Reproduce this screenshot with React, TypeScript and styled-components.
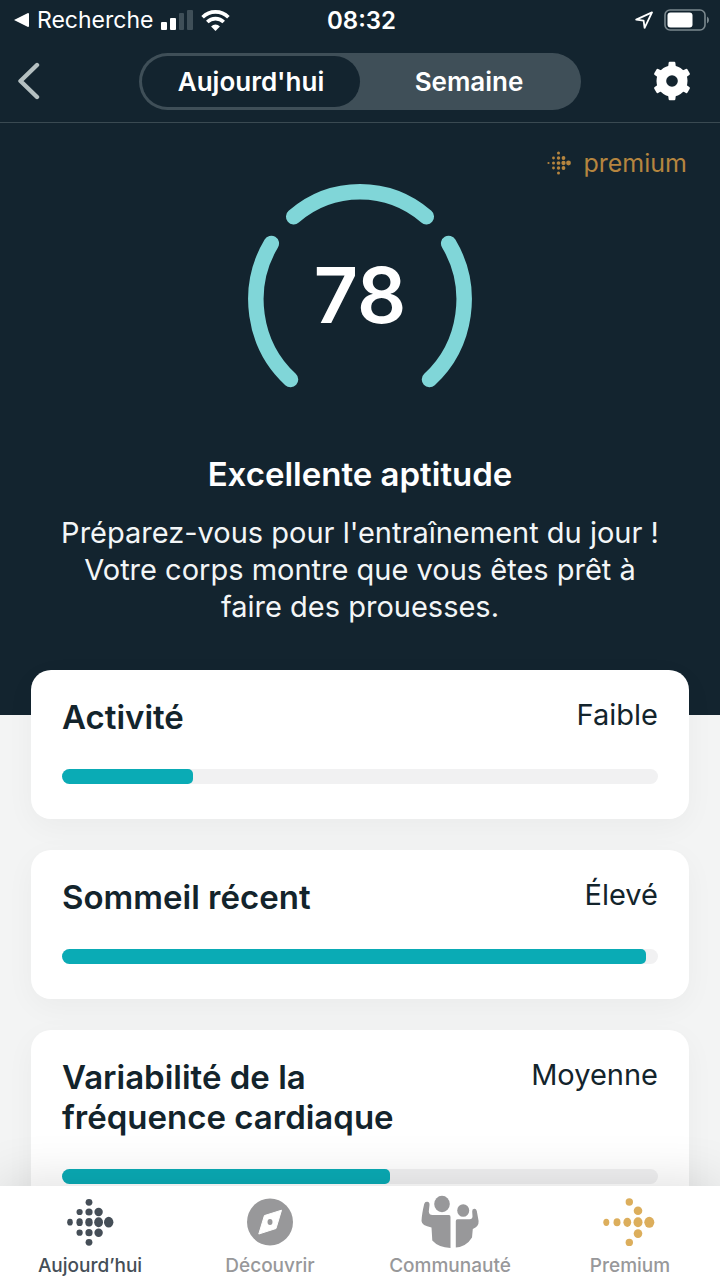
import React, { useState } from "react";
import styled, { createGlobalStyle } from "styled-components";

const color = {
  navy: "#13242f",
  slate: "#3f4f58",
  aqua: "#80d6d8",
  teal: "#0aabb5",
  gold: "#b5853f",
  amber: "#dcae5c",
  ink: "#13242c",
  grey: "#98989a",
};

const GlobalStyle = createGlobalStyle`
  *, *::before, *::after { box-sizing: border-box; }
  body {
    margin: 0;
    font-family: Inter, "Liberation Sans", sans-serif;
    color: ${color.ink};
    background: #f3f4f4;
  }
  h1, h2, p { margin: 0; }
  button { font: inherit; color: inherit; border: 0; padding: 0; background: none; cursor: pointer; }
  svg { display: block; flex: none; }
`;

const Screen = styled.div`
  display: flex;
  flex-direction: column;
  height: 100vh;
  overflow: hidden;
`;

const TopBar = styled.header`
  flex: none;
  color: #fff;
  background: ${color.navy};
  border-bottom: 1px solid #3a4a52;
`;

const StatusBar = styled.div`
  display: grid;
  grid-template-columns: 1fr auto 1fr;
  align-items: center;
  height: 40px;
  padding: 0 11px 0 14px;
`;

const StatusGroup = styled.div<{ $end?: boolean }>`
  display: flex;
  align-items: center;
  justify-content: ${(p) => (p.$end ? "flex-end" : "flex-start")};
  gap: ${(p) => (p.$end ? 11 : 8)}px;
  font-size: 23px;
`;

const Clock = styled.time`
  font-size: 24px;
  font-weight: 600;
`;

const NavBar = styled.div`
  display: grid;
  grid-template-columns: 1fr minmax(0, 442px) 1fr;
  align-items: center;
  height: 82px;
  padding: 0 16px;
`;

const IconButton = styled.button<{ $end?: boolean }>`
  display: flex;
  justify-self: ${(p) => (p.$end ? "end" : "start")};
  padding-right: 12px;
`;

const Segmented = styled.div`
  display: grid;
  grid-template-columns: 1fr 1fr;
  height: 57px;
  padding: 3px;
  border-radius: 29px;
  background: ${color.slate};
`;

const Segment = styled.button<{ $active: boolean }>`
  border-radius: 26px;
  font-size: 26px;
  font-weight: 600;
  background: ${(p) => (p.$active ? color.navy : "transparent")};
`;

const Content = styled.main`
  flex: 1;
  min-height: 0;
  overflow-y: auto;
  scrollbar-width: none;
`;

const Hero = styled.section`
  display: flex;
  flex-direction: column;
  align-items: center;
  padding: 26px 33px 90px;
  text-align: center;
  color: #fff;
  background: ${color.navy};
`;

const PremiumBadge = styled.div`
  display: flex;
  align-items: center;
  align-self: flex-end;
  gap: 12px;
  height: 28px;
  font-size: 25px;
  color: ${color.gold};
`;

const ScoreRing = styled.div`
  display: grid;
  place-items: center;
  margin-top: 5px;
  > * { grid-area: 1 / 1; }
`;

const Score = styled.strong`
  font-size: 77px;
  font-weight: 600;
  line-height: 80px;
`;

const HeroTitle = styled.h1`
  margin-top: 46px;
  font-size: 33px;
  line-height: 40px;
  font-weight: 600;
`;

const HeroText = styled.p`
  max-width: 620px;
  margin-top: 20px;
  font-size: 29px;
  line-height: 37px;
  color: #f3f6f7;
`;

const CardList = styled.div`
  display: flex;
  flex-direction: column;
  gap: 31px;
  margin-top: -45px;
  padding: 0 31px 31px;
`;

const Card = styled.section`
  padding: 27px 31px 35px;
  border-radius: 20px;
  background: #fff;
  box-shadow: 0 8px 30px rgba(0, 0, 0, 0.04);
`;

const CardHead = styled.div`
  display: flex;
  justify-content: space-between;
  align-items: flex-start;
  gap: 16px;
`;

const CardTitle = styled.h2`
  max-width: 360px;
  font-size: 33px;
  line-height: 40px;
  font-weight: 600;
`;

const Level = styled.span`
  font-size: 29px;
  line-height: 35px;
`;

const Track = styled.div`
  height: 15px;
  margin-top: 32px;
  overflow: hidden;
  border-radius: 8px;
  background: #f1f1f2;
`;

const Fill = styled.div`
  height: 100%;
  border-radius: 0 5px 5px 0;
  background: ${color.teal};
`;

const TabBar = styled.nav`
  position: relative;
  flex: none;
  display: grid;
  grid-template-columns: repeat(4, 1fr);
  height: 94px;
  padding-top: 9px;
  background: #fff;
  box-shadow: 0 -6px 50px rgba(0, 0, 0, 0.12);
`;

const Tab = styled.a<{ $active?: boolean }>`
  display: flex;
  flex-direction: column;
  align-items: center;
  gap: 5px;
  font-size: 19px;
  line-height: 24px;
  font-weight: 500;
  text-decoration: none;
  color: ${(p) => (p.$active ? "#454e57" : color.grey)};
`;

type Dot = [x: number, y: number, rx: number, ry?: number];

const todayDots: Dot[] = [
  [23, 4.3, 3.4], [13.6, 14, 3.1], [23, 14, 3.6], [32.6, 14, 4.2],
  [4, 24.2, 2.8, 3.4], [13.6, 24.2, 3.2, 3.9], [23, 24.2, 3.7, 4.3], [32.6, 24.2, 4.4, 5], [42.7, 24.2, 4.7, 5.4],
  [13.6, 34.7, 3.1], [23, 34.7, 3.6], [32.6, 34.7, 4.2], [23, 44.3, 3.4],
];

const badgeDots: Dot[] = [
  [23, 4, 3], [13, 14, 2.8], [23, 14, 3.4], [33, 14, 3.8],
  [3, 24, 2.2], [13, 24, 3], [23, 24, 3.7], [33, 24, 4.3], [43, 24, 4.8],
  [13, 34, 2.8], [23, 34, 3.4], [33, 34, 3.8], [23, 44, 3],
];

const premiumDots: Dot[] = [
  [27.3, 4, 3.7], [36, 12.8, 4.3], [4.3, 24.3, 3, 3.6], [15, 24.3, 3.5, 4], [25.3, 24.3, 3.9, 4.6],
  [36, 24.3, 4.5, 5], [47.3, 24.3, 5, 5.5], [36, 35.6, 4.3], [27.3, 44.4, 3.7],
];

function Dots({ dots, width, height, box, fill = "currentColor" }: {
  dots: Dot[]; width: number; height: number; box: string; fill?: string;
}) {
  return (
    <svg width={width} height={height} viewBox={box} fill={fill} aria-hidden="true">
      {dots.map(([x, y, rx, ry = rx]) => (
        <ellipse key={`${x}-${y}`} cx={x} cy={y} rx={rx} ry={ry} />
      ))}
    </svg>
  );
}

const BackTriangle = () => (
  <svg width="15" height="14" viewBox="0 0 15 14" fill="#fff" aria-hidden="true">
    <path d="M0 7 14 0Q15 0 15 1V13Q15 14 14 14Z" />
  </svg>
);

const SignalIcon = () => (
  <svg width="32" height="20" viewBox="0 0 32 20" fill="#fff" aria-hidden="true">
    <rect x="0" y="12" width="6" height="8" rx="1" />
    <rect x="9" y="8" width="6" height="12" rx="1" />
    <rect x="18" y="3" width="5" height="17" rx="1" fill={color.slate} />
    <rect x="26" y="0" width="6" height="20" rx="1" fill={color.slate} />
  </svg>
);

const WifiIcon = () => (
  <svg width="29" height="21" viewBox="0 0 29 21" fill="none" stroke="#fff" strokeWidth="3.6" aria-hidden="true">
    <path d="M1.6 7.2a18.2 18.2 0 0 1 25.8 0" />
    <path d="M6.3 12a11.6 11.6 0 0 1 16.4 0" />
    <path d="M14.5 21l-4.4-4.6a6.3 6.3 0 0 1 8.8 0z" fill="#fff" stroke="none" />
  </svg>
);

const LocationIcon = () => (
  <svg width="18" height="18" viewBox="0 0 18 18" fill="none" stroke="#fff" strokeWidth="1.8" strokeLinejoin="round" aria-hidden="true">
    <path d="M17 1.400 9.600 16.800 8.600 9.600 1.200 8.600Z" />
  </svg>
);

const BatteryIcon = () => (
  <svg width="45" height="22" viewBox="0 0 45 22" aria-hidden="true">
    <rect x="1" y="1" width="40" height="20" rx="5" fill="none" stroke="#7b888e" strokeWidth="1.6" />
    <rect x="3.5" y="3.5" width="25" height="15" rx="3" fill="#fff" />
    <path d="M43 7.5q2 1.200 2 3.500t-2 3.500z" fill="#7b888e" />
  </svg>
);

const ChevronIcon = () => (
  <svg width="26" height="38" viewBox="0 0 26 38" fill="none" stroke="#b5c0c1" strokeWidth="4.4" strokeLinecap="round" strokeLinejoin="round" aria-hidden="true">
    <path d="M21 3 4.500 19 21 35" />
  </svg>
);

const GearIcon = () => (
  <svg width="40" height="40" viewBox="-20 -20 40 40" aria-hidden="true">
    <g fill="#fff">
      {[0, 60, 120, 180, 240, 300].map((angle) => (
        <path key={angle} transform={`rotate(${angle})`} d="M-4.500-13.500Q-3.400-15-3.400-18 -3.400-19.200-2.200-19.200H2.200Q3.400-19.200 3.400-18 3.400-15 4.500-13.500Z" />
      ))}
      <circle r="15.500" />
    </g>
    <circle r="5.800" fill={color.navy} />
  </svg>
);

const RingArcs = () => (
  <svg width="226" height="226" viewBox="-113 -117 226 226" fill="none" stroke={color.aqua} strokeWidth="15.500" strokeLinecap="round" aria-hidden="true">
    <path d="M-66.300-82.300A103.500 107 0 0 1 66.300-82.300" />
    <path d="M-88.700-55.500A103.500 107 0 0 0-69.500 80.500" />
    <path d="M88.700-55.500A103.500 107 0 0 1 69.500 80.500" />
  </svg>
);

const CompassIcon = () => (
  <svg width="48" height="54" viewBox="0 -3 48 54" aria-hidden="true">
    <ellipse cx="24" cy="24" rx="23" ry="23.500" fill={color.grey} />
    <path d="M35.500 12.200 30 30.500 12.800 36 18.400 17.600Z" fill="#fff" stroke="#fff" strokeWidth="1" strokeLinejoin="round" />
    <ellipse cx="24" cy="24" rx="2.500" ry="3" fill={color.grey} />
  </svg>
);

const CommunityIcon = () => (
  <svg width="60" height="54" viewBox="0 0 60 54" fill={color.grey} aria-hidden="true">
    <ellipse cx="22" cy="9" rx="7.800" ry="8.200" />
    <ellipse cx="43.200" cy="15.500" rx="6" ry="6.300" />
    <path d="M4.200 9Q4.800 6.500 7.300 6.800 9.800 7.200 9.500 10L8.800 16.500Q9 20 12.500 20H29Q30.500 20 30.500 22V53Q18.500 52.500 12.300 45.500L11.500 32.500Q1.600 30.500 1.500 26Q1.800 19 4.200 9Z" />
    <path d="M35.800 26Q35.800 24.300 37.500 24.300H49.500Q52.500 24 52.500 21.500L52.200 16.500Q52 14 54.200 13.800 56.200 13.600 56.800 16L58.600 26Q59 31.500 52.800 34L52 42.500Q46.500 51.500 35.800 52.600Z" />
  </svg>
);

const metrics = [
  { title: "Activité", level: "Faible", value: 22 },
  { title: "Sommeil récent", level: "Élevé", value: 98 },
  { title: "Variabilité de la fréquence cardiaque", level: "Moyenne", value: 55 },
];

const periods = ["Aujourd'hui", "Semaine"];

export default function App() {
  const [period, setPeriod] = useState(periods[0]);

  return (
    <Screen>
      <GlobalStyle />
      <TopBar>
        <StatusBar>
          <StatusGroup>
            <BackTriangle />
            <span>Recherche</span>
            <SignalIcon />
            <WifiIcon />
          </StatusGroup>
          <Clock>08:32</Clock>
          <StatusGroup $end>
            <LocationIcon />
            <BatteryIcon />
          </StatusGroup>
        </StatusBar>
        <NavBar>
          <IconButton type="button" aria-label="Retour">
            <ChevronIcon />
          </IconButton>
          <Segmented>
            {periods.map((name) => (
              <Segment
                key={name}
                type="button"
                aria-pressed={name === period}
                $active={name === period}
                onClick={() => setPeriod(name)}
              >
                {name}
              </Segment>
            ))}
          </Segmented>
          <IconButton type="button" aria-label="Paramètres" $end>
            <GearIcon />
          </IconButton>
        </NavBar>
      </TopBar>

      <Content>
        <Hero>
          <PremiumBadge>
            <Dots dots={badgeDots} width={24} height={24} box="0 0 48 48" />
            <span>premium</span>
          </PremiumBadge>
          <ScoreRing>
            <RingArcs />
            <Score>78</Score>
          </ScoreRing>
          <HeroTitle>Excellente aptitude</HeroTitle>
          <HeroText>
            Préparez-vous pour l'entraînement du jour ! Votre corps montre que vous êtes prêt à faire des prouesses.
          </HeroText>
        </Hero>
        <CardList>
          {metrics.map((m) => (
            <Card key={m.title}>
              <CardHead>
                <CardTitle>{m.title}</CardTitle>
                <Level>{m.level}</Level>
              </CardHead>
              <Track role="progressbar" aria-label={m.title} aria-valuenow={m.value} aria-valuemin={0} aria-valuemax={100}>
                <Fill style={{ width: `${m.value}%` }} />
              </Track>
            </Card>
          ))}
        </CardList>
      </Content>

      <TabBar>
        <Tab href="#aujourdhui" $active aria-current="page">
          <Dots dots={todayDots} width={48} height={54} box="0 -3 48 54" />
          Aujourd’hui
        </Tab>
        <Tab href="#decouvrir">
          <CompassIcon />
          Découvrir
        </Tab>
        <Tab href="#communaute">
          <CommunityIcon />
          Communauté
        </Tab>
        <Tab href="#premium">
          <Dots dots={premiumDots} width={56} height={54} box="0 -3 56 54" fill={color.amber} />
          Premium
        </Tab>
      </TabBar>
    </Screen>
  );
}
